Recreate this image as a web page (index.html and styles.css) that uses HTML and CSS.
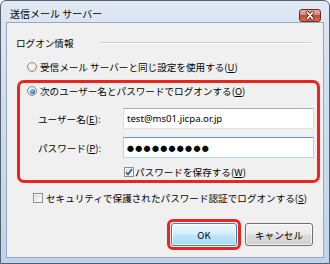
FILE: index.html
```html
<!DOCTYPE html>
<html lang="ja">
<head>
<meta charset="utf-8">
<title>送信メール サーバー</title>
<link rel="stylesheet" href="styles.css">
</head>
<body>
<div class="window">
  <div class="titlebar">
    <span class="title">送信メール サーバー</span>
    <span class="close">
      <svg width="22" height="13" viewBox="0 0 22 13">
        <defs>
          <linearGradient id="cg" x1="0" y1="0" x2="0" y2="1">
            <stop offset="0" stop-color="#eab0a4"/>
            <stop offset="0.45" stop-color="#d98573"/>
            <stop offset="0.5" stop-color="#c5452f"/>
            <stop offset="1" stop-color="#da6f5c"/>
          </linearGradient>
        </defs>
        <rect x="0.5" y="0.5" width="21" height="12" rx="2.5" fill="url(#cg)" stroke="#6e2b22"/>
        <path d="M8.5 3.5 L13.5 9.5 M13.5 3.5 L8.5 9.5" stroke="#5a1f18" stroke-width="3.4" stroke-linecap="round"/>
        <path d="M8.5 3.5 L13.5 9.5 M13.5 3.5 L8.5 9.5" stroke="#ffffff" stroke-width="1.8" stroke-linecap="round"/>
      </svg>
    </span>
  </div>
  <div class="client">
    <div class="group-head">
      <span>ログオン情報</span>
      <span class="rule"></span>
    </div>
    <div class="opt opt-first">
      <span class="radio"></span>
      <span>受信メール サーバーと同じ設定を使用する(<u>U</u>)</span>
    </div>
    <div class="highlight">
      <div class="opt opt-second">
        <span class="radio checked"></span>
        <span>次のユーザー名とパスワードでログオンする(<u>O</u>)</span>
      </div>
      <div class="field field-user">
        <span class="label">ユーザー名(<u>E</u>):</span>
        <div class="input">test@ms01.jicpa.or.jp</div>
      </div>
      <div class="field field-pass">
        <span class="label">パスワード(<u>P</u>):</span>
        <div class="input focus"><span class="dots">●●●●●●●●●●</span></div>
      </div>
      <div class="opt opt-save">
        <span class="check checked">
          <svg width="8" height="8" viewBox="0 0 8 8"><path d="M1 4.2 L3 6.5 L7 1" fill="none" stroke="#3b4f8c" stroke-width="1.6"/></svg>
        </span>
        <span>パスワードを保存する(<u>W</u>)</span>
      </div>
    </div>
    <div class="opt opt-spa">
      <span class="check"></span>
      <span>セキュリティで保護されたパスワード認証でログオンする(<u>S</u>)</span>
    </div>
    <div class="buttons">
      <div class="ring"><div class="btn btn-default">OK</div></div>
      <div class="btn">キャンセル</div>
    </div>
  </div>
</div>
</body>
</html>
```
FILE: styles.css
```css
html, body {
  margin: 0;
  padding: 0;
}
body {
  width: 330px;
  height: 264px;
  overflow: hidden;
  font-family: "Noto Sans CJK JP", "Noto Sans", sans-serif;
  font-size: 9.6px;
  color: #000;
}
u {
  text-decoration: underline;
  text-underline-offset: 1px;
}
.window {
  box-sizing: border-box;
  width: 330px;
  height: 264px;
  border: 1px solid #56616d;
  border-radius: 6px 6px 0 0;
  background: linear-gradient(180deg, #dfe8f3 0%, #cfdeef 40%, #bfd4ec 100%);
  padding: 0 5px 5px;
  display: flex;
  flex-direction: column;
}
.titlebar {
  height: 21px;
  display: flex;
  align-items: flex-start;
  justify-content: space-between;
  padding-left: 4px;
}
.title {
  font-size: 10px;
  line-height: 14px;
  padding-top: 6px;
}
.close {
  display: block;
  margin-top: 8px;
  margin-right: 3px;
  height: 13px;
}
.close svg {
  display: block;
}
.client {
  flex: 1;
  border: 1px solid #97a9bf;
  background: #f0f0f0;
  display: flex;
  flex-direction: column;
}
.group-head {
  display: flex;
  align-items: center;
  height: 14px;
  line-height: 14px;
  margin: 13px 12px 0 9px;
}
.rule {
  margin-left: auto;
  width: 211px;
  height: 0;
  border-top: 1px solid #cfcfcf;
  border-bottom: 1px solid #ffffff;
}
.opt {
  display: flex;
  align-items: center;
  height: 14px;
  line-height: 14px;
}
.opt-first {
  margin: 10px 0 0 20px;
  gap: 3px;
}
.radio {
  box-sizing: border-box;
  width: 10px;
  height: 10px;
  border-radius: 50%;
  border: 1px solid #8a8c8e;
  background: radial-gradient(circle at 50% 40%, #ffffff 0%, #ececec 50%, #cfcfcf 100%);
  display: flex;
  align-items: center;
  justify-content: center;
  flex: none;
}
.radio.checked::after {
  content: "";
  width: 5px;
  height: 5px;
  border-radius: 50%;
  background: radial-gradient(circle at 40% 35%, #9fdaf7 0%, #2d6aa3 65%, #1c4c7c 100%);
}
.check {
  box-sizing: border-box;
  width: 10px;
  height: 10px;
  border: 1px solid #8e8f8f;
  background: linear-gradient(135deg, #d6d6d6 0%, #f4f4f4 70%, #ffffff 100%);
  box-shadow: inset 0 0 0 1px #f5f5f5;
  display: flex;
  align-items: center;
  justify-content: center;
  flex: none;
}
.check svg {
  display: block;
}
.highlight {
  box-sizing: border-box;
  margin: 6px 0 0 10px;
  width: 303px;
  border: 3px solid #e8261d;
  border-radius: 7px;
  padding: 1px 0 1px 0;
  display: flex;
  flex-direction: column;
}
.opt-second {
  margin-left: 7px;
  gap: 3px;
}
.field {
  display: flex;
  align-items: center;
  height: 21px;
}
.field-user {
  margin-top: 10px;
}
.field-pass {
  margin-top: 8px;
}
.label {
  margin-left: 18px;
  width: 85px;
  line-height: 14px;
}
.input {
  box-sizing: border-box;
  width: 191px;
  height: 21px;
  background: #ffffff;
  border: 1px solid #dbdfe6;
  border-top-color: #abadb3;
  padding: 0 3px;
  display: flex;
  align-items: center;
  font-family: "Noto Sans", "Noto Sans CJK JP", sans-serif;
  font-size: 9.6px;
}
.input.focus {
  border-color: #b5d4ed;
  border-top-color: #5d98c8;
}
.dots {
  font-family: "Noto Sans CJK JP", sans-serif;
  font-size: 7px;
  line-height: 10px;
  letter-spacing: 1.3px;
  margin-left: 0;
}
.opt-save {
  margin: 7px 0 0 104px;
  gap: 1px;
}
.opt-spa {
  margin: 8px 0 0 26px;
  gap: 3px;
}
.buttons {
  display: flex;
  align-items: center;
  justify-content: flex-end;
  margin: 14px 10px 0 0;
  gap: 4px;
}
.ring {
  border: 3px solid #e8261d;
  border-radius: 6px;
  padding: 1px;
}
.btn {
  box-sizing: border-box;
  width: 68px;
  height: 23px;
  border: 1px solid #707070;
  border-radius: 3px;
  background: linear-gradient(180deg, #f2f2f2 0%, #ebebeb 48%, #dddddd 52%, #cfcfcf 100%);
  box-shadow: inset 0 0 0 1px rgba(255, 255, 255, 0.7);
  display: flex;
  align-items: center;
  justify-content: center;
  line-height: 14px;
}
.btn-default {
  width: 66px;
  border-color: #3c7fb1;
  background: linear-gradient(180deg, #eaf6fd 0%, #d9f0fc 48%, #bee6fd 52%, #a7d9f5 100%);
  box-shadow: inset 0 0 0 1px rgba(255, 255, 255, 0.8);
}
```
